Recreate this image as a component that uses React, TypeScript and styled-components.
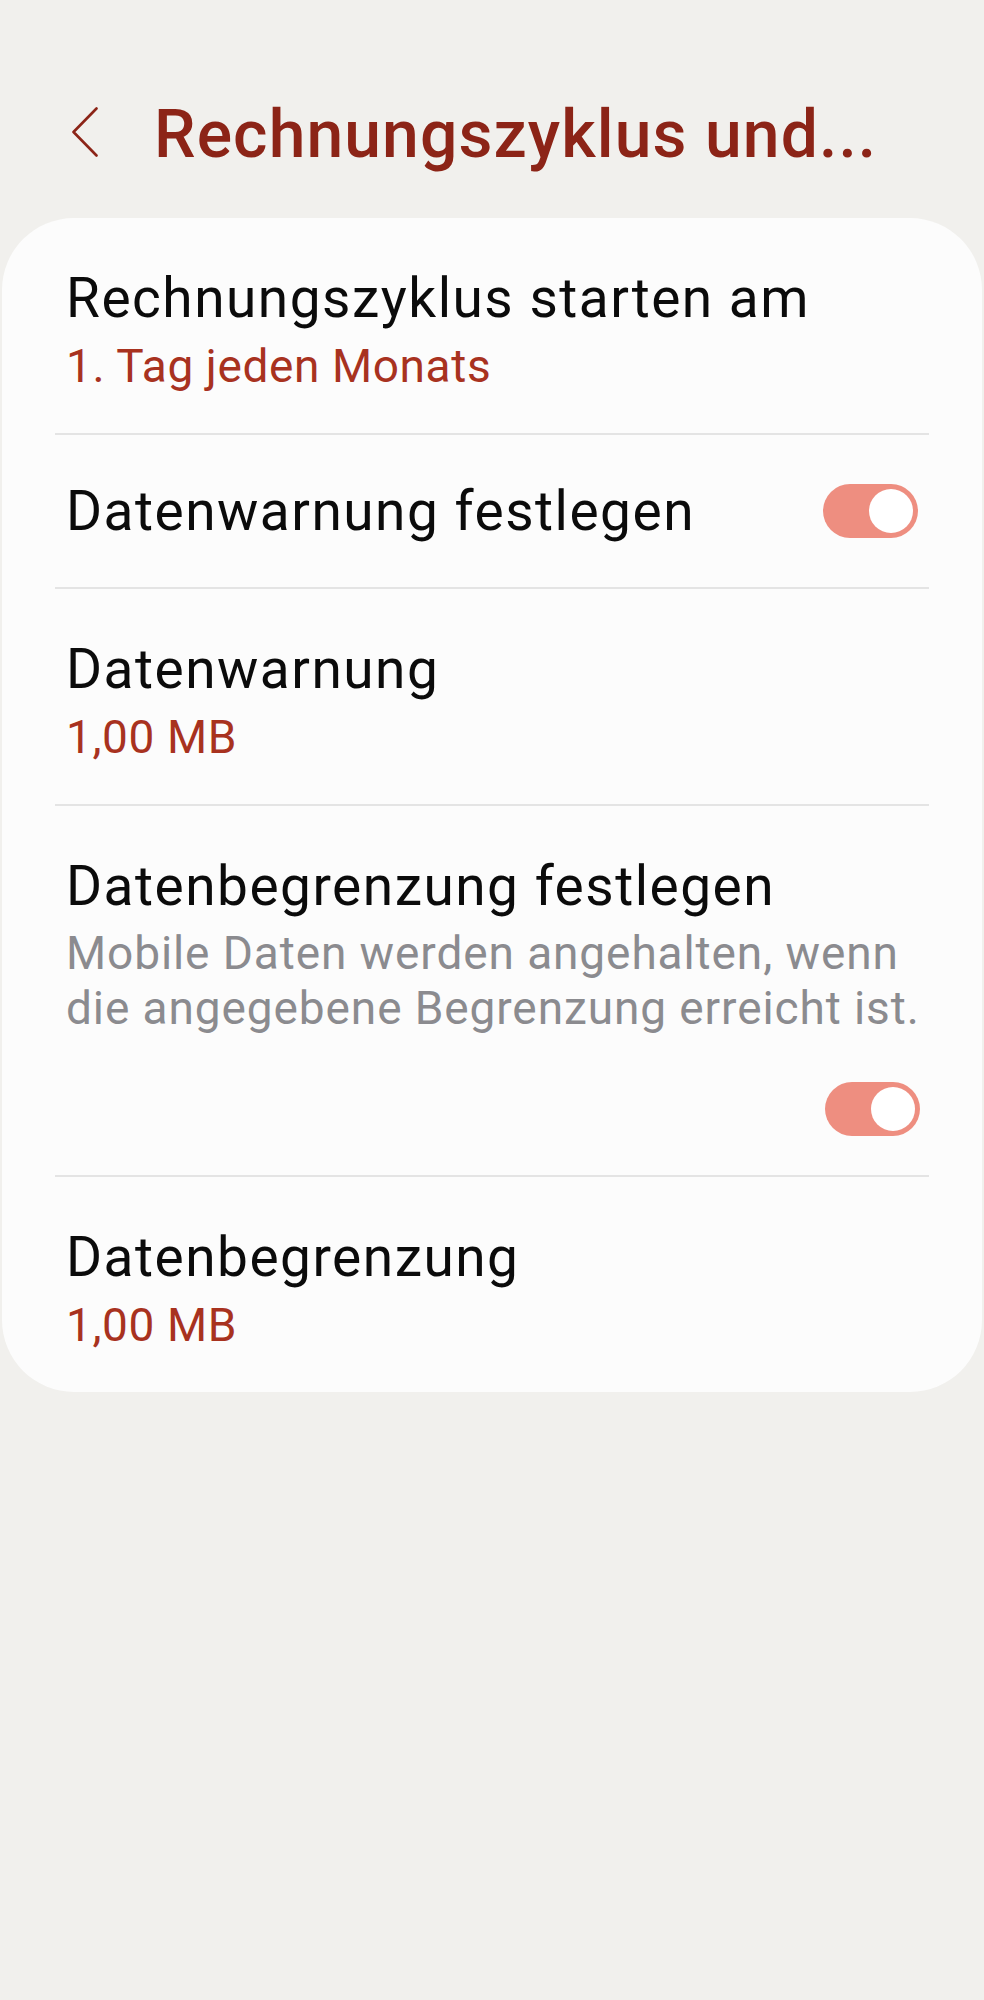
import React from 'react';
import styled, { createGlobalStyle } from 'styled-components';

const GlobalStyle = createGlobalStyle`
  html, body {
    margin: 0;
    padding: 0;
    background: #f1f0ed;
  }
  body {
    font-family: Roboto, "Noto Sans", sans-serif;
    -webkit-font-smoothing: antialiased;
  }
`;

const Page = styled.div`
  width: 984px;
  min-height: 2000px;
  background: #f1f0ed;
`;

const Header = styled.header`
  display: flex;
  align-items: flex-start;
  gap: 56px;
  padding: 95px 0 43px 72px;
`;

const BackIcon = styled.svg`
  width: 26px;
  height: 50px;
  margin-top: 12px;
  flex-shrink: 0;
`;

const Title = styled.h1`
  margin: 0;
  font-size: 66px;
  line-height: 80px;
  font-weight: 500;
  letter-spacing: 1.1px;
  color: #8c2417;
  white-space: nowrap;
`;

const Card = styled.section`
  margin: 0 2px;
  padding: 0 53px;
  background: #fcfcfc;
  border-radius: 72px;
`;

const Row = styled.div<{ $center?: boolean }>`
  display: flex;
  align-items: ${(p) => (p.$center ? 'center' : 'flex-start')};
  justify-content: space-between;
  padding: ${(p) => (p.$center ? '44px 11px' : '48px 11px 39px')};
  border-bottom: 2px solid #e4e4e4;

  &:last-child {
    border-bottom: none;
    padding-bottom: 39px;
  }
`;

const Stack = styled.div`
  display: flex;
  flex-direction: column;
  flex: 1;
`;

const ItemTitle = styled.div`
  font-size: 55px;
  line-height: 64px;
  letter-spacing: 1.5px;
  color: #0b0b0b;
  white-space: nowrap;
`;

const ItemValue = styled.div`
  margin-top: 8px;
  font-size: 46px;
  line-height: 56px;
  letter-spacing: 0.6px;
  color: #a8321f;
`;

const ItemDesc = styled.div`
  margin-top: 8px;
  font-size: 46px;
  line-height: 55px;
  letter-spacing: 0.9px;
  color: #8b8b8f;
  white-space: nowrap;
`;

const SwitchRow = styled.div`
  display: flex;
  justify-content: flex-end;
  margin-top: 46px;
`;

const Switch = styled.div<{ $on?: boolean }>`
  width: 95px;
  height: 54px;
  box-sizing: border-box;
  padding: 5px;
  border-radius: 27px;
  background: ${(p) => (p.$on ? '#ee8e80' : '#c9c9c9')};
  display: flex;
  justify-content: ${(p) => (p.$on ? 'flex-end' : 'flex-start')};
  flex-shrink: 0;
`;

const Thumb = styled.div`
  width: 44px;
  height: 44px;
  border-radius: 50%;
  background: #ffffff;
`;

export default function App() {
  return (
    <Page>
      <GlobalStyle />
      <Header>
        <BackIcon viewBox="0 0 26 50" fill="none">
          <polyline
            points="24.5,1.5 1.5,25 24.5,48.5"
            stroke="#8c2417"
            strokeWidth="2.6"
            strokeLinecap="round"
            strokeLinejoin="round"
          />
        </BackIcon>
        <Title>Rechnungszyklus und...</Title>
      </Header>
      <Card>
        <Row>
          <Stack>
            <ItemTitle>Rechnungszyklus starten am</ItemTitle>
            <ItemValue>1. Tag jeden Monats</ItemValue>
          </Stack>
        </Row>
        <Row $center>
          <ItemTitle>Datenwarnung festlegen</ItemTitle>
          <Switch $on>
            <Thumb />
          </Switch>
        </Row>
        <Row>
          <Stack>
            <ItemTitle>Datenwarnung</ItemTitle>
            <ItemValue>1,00 MB</ItemValue>
          </Stack>
        </Row>
        <Row>
          <Stack>
            <ItemTitle>Datenbegrenzung festlegen</ItemTitle>
            <ItemDesc>
              Mobile Daten werden angehalten, wenn
              <br />
              die angegebene Begrenzung erreicht ist.
            </ItemDesc>
            <SwitchRow>
              <Switch $on>
                <Thumb />
              </Switch>
            </SwitchRow>
          </Stack>
        </Row>
        <Row>
          <Stack>
            <ItemTitle>Datenbegrenzung</ItemTitle>
            <ItemValue>1,00 MB</ItemValue>
          </Stack>
        </Row>
      </Card>
    </Page>
  );
}
